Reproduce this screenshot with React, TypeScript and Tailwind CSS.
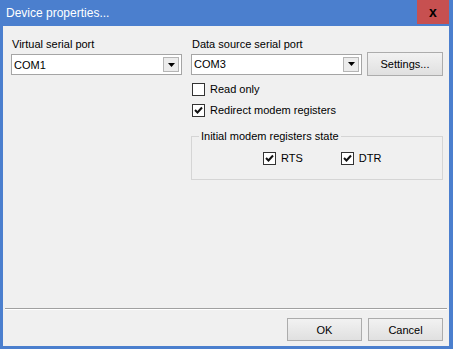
import { ReactNode } from "react";

function Check({ checked }: { checked?: boolean }) {
  return (
    <span className="flex h-[13px] w-[13px] shrink-0 items-center justify-center border border-[#333333] bg-white">
      {checked && (
        <svg width="9" height="9" viewBox="0 0 9 9">
          <path d="M1 4 L3.5 6.5 L8 1.5" stroke="#111" strokeWidth="2" fill="none" />
        </svg>
      )}
    </span>
  );
}

function CheckRow({ checked, children }: { checked?: boolean; children: ReactNode }) {
  return (
    <div className="flex items-center gap-[5px]">
      <Check checked={checked} />
      <span>{children}</span>
    </div>
  );
}

function Combo({ value }: { value: string }) {
  return (
    <div className="flex h-[21px] w-[171px] items-center border border-[#a5a5a5] bg-white pl-[2px] pr-[2px]">
      <span className="flex-1">{value}</span>
      <span className="flex h-[15px] w-[16px] items-center justify-center border border-[#b5b5b5] bg-[#ececec]">
        <svg width="7" height="4" viewBox="0 0 7 4">
          <path d="M0 0 H7 L3.5 4 Z" fill="#000" />
        </svg>
      </span>
    </div>
  );
}

function Button({ children, className }: { children: ReactNode; className?: string }) {
  return (
    <button
      type="button"
      className={`flex w-[75px] items-center justify-center border border-[#acacac] bg-gradient-to-b from-[#f2f2f2] to-[#e0e0e0] ${className ?? ""}`}
    >
      {children}
    </button>
  );
}

export default function App() {
  return (
    <div
      className="flex h-[349px] w-[453px] flex-col bg-[#4b7fce] text-[11px] leading-[14px] text-black"
      style={{ fontFamily: '"Liberation Sans", Arial, sans-serif' }}
    >
      {/* Title bar */}
      <div className="flex h-[26px] shrink-0 items-start">
        <span className="ml-[6px] mt-[5px] flex-1 text-[12px] leading-[16px] text-white">
          Device properties...
        </span>
        <span className="mr-[4px] flex h-[24px] w-[32px] items-center justify-center bg-[#c75050] text-[14px] font-bold leading-none text-black">
          x
        </span>
      </div>

      {/* Client */}
      <div className="mb-[3px] ml-[3px] mr-[4px] flex flex-1 flex-col bg-[#f0f0f0]">
        <div className="flex pl-[8px] pt-[11px]">
          <div className="w-[171px]">
            <p className="pl-[1px]">Virtual serial port</p>
            <div className="mt-[3px]">
              <Combo value="COM1" />
            </div>
          </div>

          <div className="ml-[9px]">
            <p className="pl-[1px]">Data source serial port</p>
            <div className="mt-[1px] flex items-center gap-[5px]">
              <Combo value="COM3" />
              <Button className="h-[24px] w-[76px]">Settings...</Button>
            </div>
            <div className="mt-[6px] flex flex-col gap-[7px] pl-[1px]">
              <CheckRow>Read only</CheckRow>
              <CheckRow checked>Redirect modem registers</CheckRow>
            </div>
            <fieldset className="mt-[12px] h-[51px] w-[252px] border border-[#d5d5d5] pl-[7px]">
              <legend className="px-[2px]">Initial modem registers state</legend>
              <div className="mt-[8px] flex gap-[38px] pl-[64px]">
                <CheckRow checked>RTS</CheckRow>
                <CheckRow checked>DTR</CheckRow>
              </div>
            </fieldset>
          </div>
        </div>

        <div className="flex-1" />

        <div className="mx-[2px] border-t border-[#a0a0a0] border-b border-b-white" />
        <div className="flex justify-end gap-[6px] pb-[5px] pr-[6px] pt-[8px]">
          <Button className="h-[23px]">OK</Button>
          <Button className="h-[23px]">Cancel</Button>
        </div>
      </div>
    </div>
  );
}
